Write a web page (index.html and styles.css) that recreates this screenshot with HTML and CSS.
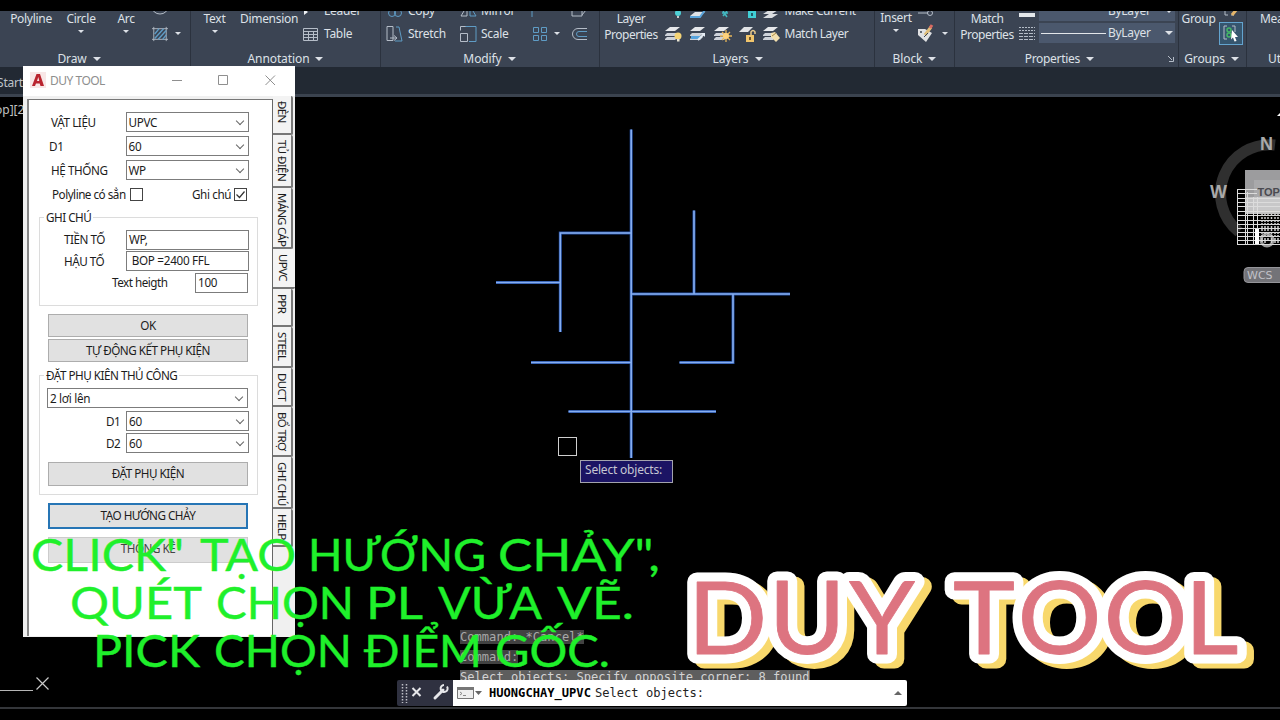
FILE: index.html
```html
<!DOCTYPE html>
<html lang="vi">
<head>
    <meta charset="UTF-8">
    <meta name="viewport" content="width=device-width, initial-scale=1.0">
    <title>DUY TOOL</title>
    <link rel="stylesheet" href="styles.css">
</head>
<body>
<div class="screen">
    <!-- Ribbon -->
    <div class="ribbon">
        <div class="panel draw">
            <div class="tools">
                <div class="big w-polyline">Polyline</div>
                <div class="big w-circle">Circle<i class="caret small"></i></div>
                <div class="big w-arc">Arc<i class="caret small"></i></div>
                <div class="col">
                    <div class="row"><svg width="18" height="18"><ellipse cx="8" cy="5" rx="8" ry="7" class="ln-w"/></svg></div>
                    <div class="row"><svg width="16" height="16" viewBox="0 0 18 18"><path d="M2 1v16M16 1v16M0 3h18M0 15h18" class="ln-w"/><path d="M3 9l5-6M3 14L13 3M7 15l9-10M12 15l4-5" class="ln-b thick"/></svg><i class="caret small gap"></i></div>
                </div>
            </div>
            <div class="panel-title">Draw<i class="caret"></i></div>
        </div>
        <div class="panel annotation">
            <div class="tools">
                <div class="big w-text">Text<i class="caret small"></i></div>
                <div class="big w-dim">Dimension</div>
                <div class="col">
                    <div class="row"><svg width="16" height="16"><path d="M1 6l4 3-4 3z" fill="#eef1f5"/></svg><span>Leader</span></div>
                    <div class="row"><svg width="16" height="16"><path d="M.5 2.5h14v12H.5zM.5 5.5h14M.5 8.5h14M.5 11.500h14M5.500 5v9M10.500 5v9" class="ln-w"/></svg><span>Table</span></div>
                </div>
            </div>
            <div class="panel-title">Annotation<i class="caret"></i></div>
        </div>
        <div class="panel modify">
            <div class="tools">
                <div class="col w-stretch">
                    <div class="row"><svg width="17" height="18"><circle cx="6" cy="11" r="3.500" class="ln-b"/><circle cx="12" cy="11" r="3.500" class="ln-b"/></svg><span>Copy</span></div>
                    <div class="row"><svg width="17" height="18"><path d="M1 1.500h6v14H1z" class="ln-w"/><path d="M10 2h3l3 14H9" class="ln-b"/><path d="M4 13h6M8 10.500l3 2.500-3 2.500" class="ln-w"/></svg><span>Stretch</span></div>
                </div>
                <div class="col w-scale">
                    <div class="row"><svg width="17" height="18"><path d="M7 4v10H1z" class="ln-w"/><path d="M10 4v10h6z" class="ln-b"/></svg><span>Mirror</span></div>
                    <div class="row"><svg width="17" height="18"><path d="M5 1.500h11v15H9" class="ln-b"/><path d="M.5 1.500h5M.5 1.500v4M.5 8.500h7v8h-7z" class="ln-w"/></svg><span>Scale</span></div>
                </div>
                <div class="col w-array">
                    <div class="row"><svg width="16" height="18"><path d="M1 0v15" class="ln-b"/></svg></div>
                    <div class="row"><svg width="16" height="16"><path d="M2.500 1.500h5v5h-5zM2.500 9.500h5v5h-5z" class="ln-b"/><path d="M10.500 1.500h5v5h-5zM10.500 9.500h5v5h-5z" class="ln-b"/></svg><i class="caret small gap"></i></div>
                </div>
                <div class="col">
                    <div class="row"><svg width="17" height="18"><path d="M1 5v9h10V5M11 13l4-5V3" class="ln-w"/></svg></div>
                    <div class="row"><svg width="17" height="16"><path d="M16 2.500H7a5.500 5.500 0 0 0 0 11h9" class="ln-w"/><path d="M16 5.500H8a2.500 2.500 0 0 0 0 5h8" class="ln-b"/></svg></div>
                </div>
            </div>
            <div class="panel-title">Modify<i class="caret"></i></div>
        </div>
        <div class="panel layers">
            <div class="tools">
                <div class="big w-layer">Layer<br>Properties</div>
                <div class="col">
                    <div class="row icons">
                        <svg width="18" height="18"><circle cx="13" cy="11" r="3" fill="#4fd0d6"/><path d="M12 14h2v2h-2z" fill="#ccc"/></svg>
                        <svg width="18" height="18"><path d="M0 14l5-4h10l-5 4z" fill="#dfe2e6"/><path d="M0 15h10l5-7" stroke="#5ba5dc" stroke-width="2" fill="none"/></svg>
                        <svg width="18" height="18"><path d="M8 11h6M9 14l4-5M9 9l4 6" stroke="#42b9c2" stroke-width="1.500"/></svg>
                        <svg width="18" height="18"><path d="M9 9h8v7H9z" fill="#40cfd6"/><path d="M12 11h2v3h-2z" fill="#235d69"/></svg>
                        <svg width="18" height="18"><path d="M0 12l6-4h9l-6 4zM0 16l6-4h9l-6 4z" fill="#d9dce0"/></svg>
                        <span>Make Current</span>
                    </div>
                    <div class="row icons">
                        <svg width="18" height="18"><use href="#sheets"/><circle cx="13" cy="11" r="3.500" fill="#f4d477"/><path d="M12 14h2.500v2.500H12z" fill="#e9e4d3"/></svg>
                        <svg width="18" height="18"><use href="#sheets"/><path d="M1 12.500h10" stroke="#58a5df" stroke-width="3"/><path d="M8 15l6-6" stroke="#e6edf5" stroke-width="2"/><path d="M11 8h4v4z" fill="#e6edf5"/></svg>
                        <svg width="18" height="18"><use href="#sheets"/><path d="M12 5v12M6 11h12M8 7l8 8M16 7l-8 8" stroke="#e8b659" stroke-width="1.300"/><circle cx="12" cy="11" r="3" fill="#ffd27a"/></svg>
                        <svg width="18" height="18"><path d="M0 7l5-5h9L9 7z" fill="#e1e3e6"/><path d="M7 10h8v7H7z" fill="#f1c56c"/><path d="M12 10V7q2-3 4 0v2" stroke="#e9c98c" stroke-width="1.500" fill="none"/><path d="M10 12h2v3h-2z" fill="#70562a"/></svg>
                        <svg width="18" height="18"><use href="#sheets"/><path d="M8 8l4-1 5 6-4 4-5-5z" fill="#f3dfae"/><path d="M9 11l4-3" stroke="#a98945"/></svg>
                        <span>Match Layer</span>
                    </div>
                </div>
            </div>
            <div class="panel-title">Layers<i class="caret"></i></div>
        </div>
        <div class="panel block">
            <div class="tools">
                <div class="big w-insert">Insert<i class="caret small"></i></div>
                <div class="col">
                    <div class="row"><svg width="18" height="18"><path d="M1 11h10" class="ln-w"/><circle cx="13" cy="11" r="2.500" class="ln-w"/></svg></div>
                    <div class="row"><svg width="18" height="19"><path d="M1 5h7l7 4-6 9-8-7z" fill="#e0e1e3"/><path d="M8 11l6-8" stroke="#dfbd79" stroke-width="3"/><path d="M13 4l2-3" stroke="#da6b62" stroke-width="3"/><circle cx="4" cy="8" r="1" fill="#3b4453"/><path d="M7 13l4-4" stroke="#3b4453"/></svg><i class="caret small gap"></i></div>
                </div>
            </div>
            <div class="panel-title">Block<i class="caret"></i></div>
        </div>
        <div class="panel properties">
            <div class="tools">
                <div class="big w-match">Match<br>Properties</div>
                <div class="col w-lines">
                    <div class="row"><svg width="16" height="18"><path d="M0 11h16v4H0z" fill="#e4e7ea"/></svg></div>
                    <div class="row"><svg width="16" height="16"><path d="M0 1.500h16M0 4.500h16" class="ln-w" stroke-dasharray="2 1"/><path d="M0 7.500h16M0 10.500h16M0 13.500h16" class="ln-w" stroke-dasharray="4 1"/></svg></div>
                </div>
                <div class="lists">
                    <div class="list"><span class="rule"></span>ByLayer<i class="caret"></i></div>
                    <div class="list"><span class="rule shown"></span>ByLayer<i class="caret"></i></div>
                </div>
            </div>
            <div class="panel-title">Properties<i class="caret"></i><svg class="launcher" width="6" height="6"><path d="M0 0l4 4M5.500 1v4.500H1" class="ln-w"/></svg></div>
        </div>
        <div class="panel groups">
            <div class="tools">
                <div class="big w-group">Group</div>
                <div class="col">
                    <div class="row"><svg width="20" height="18"><path d="M5 7v6h3M11 13h3" class="ln-w"/><path d="M12 13l5-6" stroke="#e5b66b" stroke-width="3"/></svg></div>
                    <div class="pick"><svg width="22" height="20"><path d="M7 3H4v13h3M12 3h3v6" class="ln-w"/><circle cx="9" cy="7" r="2" class="ln-g"/><circle cx="9" cy="12" r="2" class="ln-g"/><path d="M12 7l6 7h-3l1.500 4-2 .5-1.500-4-2 2z" fill="#fff"/></svg></div>
                </div>
            </div>
            <div class="panel-title">Groups<i class="caret"></i></div>
        </div>
        <div class="panel utilities">
            <div class="tools"><div class="big">Measure</div></div>
            <div class="panel-title">Utilities</div>
        </div>
    </div>
    <div class="file-tabs">Start</div>

    <!-- Drawing area -->
    <div class="model-space">
        <svg class="drawing" viewBox="0 97 1280 623" width="1280" height="623">
            <defs>
                <g id="sheets">
                    <path d="M0 6l5-4h10l-5 4z" fill="#e6e8eb"/>
                    <path d="M0 10l2-2h12l-4 3H0zM0 14l2-2h11l-3 3H0z" fill="#cdd2d9"/>
                </g>
                <path id="pipes" d="M631.200 129.500V458M631 233H560.300V332M496 282.500h64M631 294h159M694 210.500v83M733 294v68.500H679.500M531 362.500h100M568.500 411.500H716"/>
            </defs>
            <text x="-5" y="114" class="view-label">op][2</text>

            <!-- pipes -->
            <use href="#pipes" class="pipe-glow"/>
            <use href="#pipes" class="pipe-core"/>
            <rect x="558.500" y="437.500" width="18" height="18" class="pickbox"/>

            <!-- view cube -->
            <path d="M1275 145a49 49 0 0 0-36 87" class="compass"/>
            <rect x="1245" y="170" width="35" height="44" fill="#9c9c9e"/>
            <rect x="1254" y="180" width="26" height="30" fill="#a9a9ab"/>
            <text x="1266.500" y="150" class="compass-letter">N</text>
            <text x="1218.500" y="198" class="compass-letter">W</text>
            <circle cx="1267" cy="240" r="6" class="south"/>
            <rect x="1246" y="197" width="34" height="17" fill="#d8d8d8" opacity=".65"/>
            <path class="sheet-lines" d="M1237 189.500h20M1237 193.500h20M1237 198.500h43M1237 202.500h43M1237 206.500h43M1237 211.500h43M1237 215.500h43M1237 220.500h43M1237 224.500h43M1237 228.500h43M1237 232.500h43M1237 236.500h43M1237 240.500h43M1237 244.500h43M1237.500 189v56M1245.500 189v56M1247.500 192v52M1253.500 197v48M1257.500 197v48"/>
            <path d="M1262 214v28M1265 214v30M1268 214v26M1271.500 214v31M1275 214v30M1278 214v31" class="sheet-dots"/>
            <text x="1257.500" y="196" class="cube-face">TOP</text>
            <rect x="1255" y="229" width="4" height="15" fill="#fff"/>
            <path d="M1277 116l3-3v3z" fill="#fff"/>
            <rect x="1244" y="267.500" width="50" height="15" rx="4" fill="#737378" stroke="#95959a"/>
            <text x="1247" y="279" class="wcs">WCS</text>

            <path d="M0 690.500h33" stroke="#b5b5b5"/>
            <path d="M36.500 677.500l12 12M48.500 677.500l-12 12" stroke="#c9c9c9" stroke-width="1.200"/>
            <path d="M0 708h1280" stroke="#34363a" stroke-width="2"/>
        </svg>

        <div class="prompt">Select objects:</div>

        <div class="command">
            <div class="history">
                <span>Command: *Cancel*</span>
                <span>Command:</span>
                <span>Select objects: Specify opposite corner: 8 found</span>
            </div>
            <div class="command-line">
                <div class="handle">
                    <svg width="56" height="26"><path d="M5.500 4v19M9.500 4v19" stroke="#bdbfc6" stroke-width="1.500" stroke-dasharray="1.500 1.500"/><path d="M15.500 8l8 8M23.500 8l-8 8" stroke="#e6e7ea" stroke-width="2"/><path d="M38 18l8-8" stroke="#e6e7ea" stroke-width="3" stroke-linecap="round"/><path d="M50 6.500a3.500 3.500 0 1 1-3-1.500" fill="none" stroke="#e6e7ea" stroke-width="2"/></svg>
                </div>
                <div class="entry">
                    <svg width="28" height="16"><path d="M.5 2.500h16v11H.5z" fill="#eee" stroke="#777"/><path d="M0 2h17v3H0z" fill="#777"/><path d="M3 7l2 1.500L3 10M6 10.500h3" stroke="#888" fill="none"/><path d="M18 6h7l-3.500 4z" fill="#666"/></svg>
                    <b>HUONGCHAY_UPVC</b><span>Select objects:</span>
                    <i class="caret up"></i>
                </div>
            </div>
        </div>
    </div>

    <!-- Tool window -->
    <div class="window">
        <div class="title-bar">
            <svg width="16" height="16"><path d="M0 0h16v16H0z" fill="#f8e7e7"/><path d="M2 14L6.500 2h3.500l4 12h-3.500l-.8-2.500H6L5 14zM7 9h2.300L8.300 5z" fill="#b9242f" fill-rule="evenodd"/></svg>
            <span class="title">DUY TOOL</span>
            <svg class="controls" width="110" height="14"><path d="M4 7.500h10M50.500 2.500h9v9h-9zM97.500 2.500l9.500 9.500M107 2.500l-9.500 9.500" fill="none" stroke="#8f8f8f"/></svg>
        </div>
        <div class="window-body">
            <div class="form">
                <div class="field top"><label>VẬT LIỆU</label><div class="combo">UPVC</div></div>
                <div class="field top"><label class="shift-l">D1</label><div class="combo">60</div></div>
                <div class="field top"><label>HỆ THỐNG</label><div class="combo">WP</div></div>
                <div class="checks">
                    <span class="check-label">Polyline có sẳn</span><span class="check"></span>
                    <span class="check-label right">Ghi chú</span><span class="check"><svg width="11" height="11"><path d="M1.500 5.500L4.500 8.500L9.500 2.500" fill="none" stroke="#333" stroke-width="1.200"/></svg></span>
                </div>
                <fieldset class="note">
                    <legend>GHI CHÚ</legend>
                    <div class="field"><label class="l-tien">TIỀN TỐ</label><div class="input">WP,</div></div>
                    <div class="field"><label class="l-tien">HẬU TỐ</label><div class="input">&nbsp;BOP =2400 FFL</div></div>
                    <div class="field"><label class="l-height">Text heigth</label><div class="input short">100</div></div>
                </fieldset>
                <div class="button">OK</div>
                <div class="button">TỰ ĐỘNG KẾT PHỤ KIỆN</div>
                <fieldset class="fitting">
                    <legend>ĐẶT PHỤ KIÊN THỦ CÔNG</legend>
                    <div class="combo wide">2 lơi lên</div>
                    <div class="field"><label class="l-size">D1</label><div class="combo">60</div></div>
                    <div class="field"><label class="l-size">D2</label><div class="combo">60</div></div>
                    <div class="button place">ĐẶT PHỤ KIỆN</div>
                </fieldset>
                <div class="button focus">TẠO HƯỚNG CHẢY</div>
                <div class="button stats">THỐNG KÊ</div>
            </div>
            <div class="tabs">
                <div class="tab t1">ĐÈN</div>
                <div class="tab t2">TỦ ĐIỆN</div>
                <div class="tab t3">MÁNG CÁP</div>
                <div class="tab t4 active">UPVC</div>
                <div class="tab t5">PPR</div>
                <div class="tab t6">STEEL</div>
                <div class="tab t7">DUCT</div>
                <div class="tab t8">BỔ TRỢ</div>
                <div class="tab t9">GHI CHÚ</div>
                <div class="tab t10">HELP</div>
            </div>
        </div>
    </div>

    <!-- Video captions -->
    <svg class="captions" width="1280" height="720">
        <defs>
            <text id="brand" y="654.500"><tspan x="661 739 816.500 916.300 978.400 1061 1139">DUYTOOL</tspan></text>
        </defs>
        <g class="steps">
            <text x="31" y="571" textLength="153" lengthAdjust="spacingAndGlyphs">CLICK"</text>
            <text x="200" y="571" textLength="96" lengthAdjust="spacingAndGlyphs">TẠO</text>
            <text x="308" y="571" textLength="178" lengthAdjust="spacingAndGlyphs">HƯỚNG</text>
            <text x="498" y="571" textLength="162" lengthAdjust="spacingAndGlyphs">CHẢY",</text>
            <text x="70" y="619" textLength="132" lengthAdjust="spacingAndGlyphs">QUÉT</text>
            <text x="216" y="619" textLength="138" lengthAdjust="spacingAndGlyphs">CHỌN</text>
            <text x="366" y="619" textLength="57" lengthAdjust="spacingAndGlyphs">PL</text>
            <text x="438" y="619" textLength="104" lengthAdjust="spacingAndGlyphs">VỪA</text>
            <text x="557" y="619" textLength="77" lengthAdjust="spacingAndGlyphs">VẼ.</text>
            <text x="93" y="666.500" textLength="107" lengthAdjust="spacingAndGlyphs">PICK</text>
            <text x="214" y="666.500" textLength="138" lengthAdjust="spacingAndGlyphs">CHỌN</text>
            <text x="364" y="666.500" textLength="118" lengthAdjust="spacingAndGlyphs">ĐIỂM</text>
            <text x="495" y="666.500" textLength="115" lengthAdjust="spacingAndGlyphs">GỐC.</text>
        </g>
        <g class="brand" transform="scale(1.04 1)">
            <use href="#brand" class="brand-shadow"/>
            <use href="#brand" class="brand-outline"/>
            <use href="#brand" class="brand-fill"/>
        </g>
    </svg>
</div>
</body>
</html>
```
FILE: styles.css
```css
/* Global styles */
* {
    box-sizing: border-box;
}

body {
    margin: 0;
    background: #000;
    font-family: "Noto Sans", "Open Sans", sans-serif;
    font-size: 12px;
}

.screen {
    position: relative;
    width: 1280px;
    height: 720px;
    padding-top: 11px;
    overflow: hidden;
    background: #000;
}

svg {
    flex: none;
    display: block;
}

.ln-w, .ln-b, .ln-g {
    fill: none;
    stroke: #b5bdc8;
    stroke-width: 1;
}

.ln-b { stroke: #5f9cc5; }
.ln-b.thick { stroke-width: 1.6; }
.ln-g { stroke: #45b766; stroke-width: 1.5; }

/* Ribbon */
.ribbon {
    display: flex;
    height: 56px;
    background: #3b4453;
    color: #dde1e7;
    line-height: 16px;
    letter-spacing: -0.3px;
    overflow: hidden;
}

.panel {
    flex: none;
    display: flex;
    flex-direction: column;
    border-right: 1px solid #2b323e;
    overflow: hidden;
    white-space: nowrap;
}

.draw { width: 191px; }
.annotation { width: 190px; }
.modify { width: 219px; }
.layers { width: 275px; }
.block { width: 80px; }
.properties { width: 224px; }
.groups { width: 68px; }
.utilities { width: 33px; border: 0; }

.tools {
    display: flex;
    height: 39px;
    overflow: hidden;
    align-items: flex-start;
}

.panel-title {
    display: flex;
    align-items: center;
    justify-content: center;
    gap: 6px;
    height: 17px;
    letter-spacing: -0.1px;
}

.draw .panel-title { padding-right: 32px; }
.modify .panel-title { padding-right: 1px; }
.layers .panel-title { padding-left: 1px; }
.utilities .panel-title { justify-content: flex-start; padding-left: 21px; }
.groups .panel-title { padding-right: 2px; }

.launcher { margin: 0 0 0 68px; }
.properties .panel-title { justify-content: flex-end; padding-right: 4px; letter-spacing: -0.3px; }

.caret {
    border: 4px solid transparent;
    border-top: 4px solid #dde1e7;
    border-bottom: 0;
}

.caret.small {
    border-width: 3px 3px 0;
}

.caret.up {
    border-top: 0;
    border-bottom: 4px solid #666;
    margin-left: auto;
}

.gap { margin-left: 7px; }

.big {
    flex: none;
    display: flex;
    flex-direction: column;
    align-items: center;
    text-align: center;
}

.big .caret { margin-top: 3px; }
.w-polyline { width: 62px; }
.w-circle { width: 38px; }
.w-arc { width: 52px; }
.w-text { width: 47px; }
.w-dim { width: 65px; letter-spacing: -0.3px; margin-right: 0; padding-right: 3px; }
.w-layer { width: 62px; display: block; letter-spacing: -0.5px; }
.w-insert { width: 42px; margin-top: -1px; }
.w-match { width: 64px; display: block; letter-spacing: -0.5px; }
.w-group { width: 41px; padding-right: 2px; }
.utilities .big { margin-left: 13px; }

.col {
    flex: none;
    margin-top: -12px;
}

.w-stretch { width: 74px; margin-left: 5px; }
.w-scale { width: 71px; margin-left: 0; }
.w-array { width: 40px; }
.w-lines { width: 20px; }

.row {
    display: flex;
    align-items: center;
    height: 23px;
}

.row span { margin-left: 5px; }
.w-scale .row span { margin-left: 4px; }
.icons svg { margin-right: 6.5px; }
.icons span { margin-left: -3px; letter-spacing: -0.5px; }
.layers .col { padding-left: 3px; }

.lists { margin-top: -10px; }

.list {
    display: flex;
    align-items: center;
    width: 136px;
    height: 20px;
    margin-bottom: 2px;
    padding-left: 2px;
    background: #4b586d;
}

.rule {
    width: 65px;
    height: 1px;
    margin-right: 2px;
}

.rule.shown { background: #e3e6ea; }
.list .caret { margin: 0 2px 0 auto; }

.pick {
    width: 24px;
    height: 23px;
    margin-left: -1px;
    border: 1px solid #63a4cf;
    background: #36566f;
}

.file-tabs {
    height: 30px;
    padding-top: 6px;
    background: #222933;
    border-bottom: 3px solid #3b434f;
    color: #bfc3c9;
    line-height: 20px;
    text-indent: -3px;
    letter-spacing: -0.2px;
}

/* Drawing area */
.model-space {
    position: relative;
    height: 623px;
}

.view-label { font-size: 12px; fill: #c0c0c0; }
.pipe-glow { fill: none; stroke: #2450a6; stroke-width: 3; }
.pipe-core { fill: none; stroke: #86aef0; stroke-width: 1.6; }
.pickbox { fill: none; stroke: #cfcfcf; }
.compass { fill: none; stroke: #2f2f2f; stroke-width: 11; }

.compass-letter {
    font: bold 18px "Liberation Sans", sans-serif;
    fill: #a9a9a9;
    text-anchor: middle;
}

.cube-face {
    font: bold 11px "Liberation Sans", sans-serif;
    fill: #4a4a50;
}

.south { fill: none; stroke: #999; stroke-width: 3; }
.sheet-lines { stroke: #dcdcdc; stroke-width: 1; fill: none; }
.sheet-dots { stroke: #d0d0d0; stroke-width: 1.5; stroke-dasharray: 2 1; }
.wcs { font: 11px "DejaVu Sans", sans-serif; fill: #c2c2c8; }

.prompt {
    position: absolute;
    left: 580px;
    top: 363px;
    width: 93px;
    height: 23px;
    padding-left: 4px;
    border: 1px solid #a3a3ad;
    background: #1b1464;
    color: #c6c6d2;
    line-height: 18px;
    letter-spacing: -0.2px;
}

.command {
    position: absolute;
    left: 397px;
    top: 533px;
    width: 510px;
    font: 12.1px "DejaVu Sans Mono", monospace;
}

.history {
    display: flex;
    flex-direction: column;
    align-items: flex-start;
    gap: 6px;
    height: 50px;
    padding-left: 63px;
    overflow: hidden;
    color: #a9a9a9;
}

.history span {
    flex: none;
    height: 14px;
    line-height: 14px;
    background: #424242;
}

.history span:last-child { background: #5e5e5e; color: #d3d3d3; }

.command-line {
    display: flex;
    height: 26px;
}

.handle {
    width: 56px;
    background: #2f3140;
    border-radius: 2px 0 0 2px;
}

.entry {
    flex: 1;
    display: flex;
    align-items: center;
    padding: 0 5px 0 4px;
    background: #fff;
    color: #222;
    border-radius: 0 2px 2px 0;
}

.entry b { margin: 0 4px 0 4px; color: #000; }

/* Tool window */
.window {
    position: absolute;
    left: 23px;
    top: 66px;
    width: 272px;
    height: 571px;
    background: #f0f0f0;
    color: #1c1c1c;
}

.title-bar {
    display: flex;
    align-items: center;
    height: 30px;
    padding: 0 17px 2px 7px;
    background: #fff;
}

.title {
    margin-left: 4px;
    color: #8e8e8e;
    letter-spacing: -0.5px;
}

.controls { margin-left: auto; }

.window-body {
    display: flex;
    height: 541px;
    padding-left: 4px;
}

.form {
    width: 246px;
    height: 537px;
    margin-top: 3px;
    padding: 12px 0 0 11px;
    background: #fff;
    border-top: 1px solid #777;
    border-left: 2px solid #888;
    border-right: 1px solid #666;
    font-size: 11.7px;
    line-height: 17px;
    letter-spacing: -0.5px;
    white-space: nowrap;
}

.field {
    display: flex;
    align-items: center;
}

.field label { flex: none; }

.field.top {
    height: 20px;
    margin-bottom: 4px;
}

.field.top label {
    width: 85.5px;
    padding-left: 11px;
    letter-spacing: -0.4px;
}

.field.top label.shift-l { padding-left: 9px; }

.combo, .input {
    width: 123px;
    height: 20px;
    padding-left: 2px;
    border: 1px solid #7c7c7c;
    background: #fff;
    letter-spacing: -0.3px;
}

.combo {
    display: flex;
    justify-content: space-between;
    line-height: 18px;
}

.combo::after {
    content: "";
    width: 5px;
    height: 5px;
    margin: 5px 5px 0 0;
    border: solid #666;
    border-width: 0 1px 1px 0;
    transform: rotate(45deg);
}

.checks {
    display: flex;
    align-items: center;
    height: 20px;
    margin-top: 4px;
    padding-left: 12px;
    letter-spacing: -0.5px;
}

.check-label { width: 78px; }
.check-label.right { width: 42px; margin-left: 49px; letter-spacing: -0.4px; }

.check {
    width: 13px;
    height: 13px;
    border: 1px solid #444;
}

fieldset {
    width: 219px;
    margin: 0 0 0 -1px;
    padding: 0;
    border: 1px solid #dcdcdc;
    min-inline-size: 0;
}

legend {
    height: 17px;
    margin-left: 4px;
    padding: 0 2px;
}

.note {
    height: 97px;
    margin-top: 5px;
}

.note .field { height: 21px; margin-bottom: 0.5px; }
.note .field:first-of-type { margin-top: 3px; }
.l-tien { width: 86px; padding-left: 24px; }
.l-height { width: 155px; padding-left: 72px; }
.input.short { width: 53px; }

.button {
    width: 200px;
    height: 23px;
    margin: 8px 0 0 8px;
    border: 1px solid #adadad;
    background: #e1e1e1;
    line-height: 21px;
    text-align: center;
}

.button + .button { margin-top: 2px; }

.fitting {
    height: 128px;
    margin-top: 5px;
}

.combo.wide {
    width: 201px;
    margin: 4px 0 3px 7px;
}

.fitting .field { height: 20px; margin-bottom: 2px; }
.l-size { width: 86px; padding-left: 66px; }
.button.place { margin: 9px 0 0 8px; height: 24px; }

.button.focus {
    height: 26px;
    margin-top: 8px;
    border: 2px solid #2675b5;
}

.button.stats {
    height: 26px;
    margin-top: 8px;
    border-color: #ccc;
    color: #444;
}

.tabs {
    width: 19px;
    background: #f0f0f0;
}

.tab {
    width: 20px;
    padding-top: 5px;
    border-right: 2px solid #777;
    border-bottom: 2px solid #777;
    border-radius: 0 2px 2px 0;
    background: #f3f3f3;
    writing-mode: vertical-rl;
    line-height: 17px;
    white-space: nowrap;
    font-size: 11.5px;
    letter-spacing: -0.6px;
}

.tab.active {
    width: 22px;
    padding-right: 3px;
    border-right: 0;
    background: #f4f4f4;
}

.t1 { height: 39px; }
.t2 { height: 53px; }
.t3 { height: 61px; letter-spacing: -0.8px; }
.t4 { height: 40px; }
.t5 { height: 38px; }
.t6 { height: 41px; }
.t7 { height: 39px; }
.t8 { height: 50px; }
.t9 { height: 52px; }
.t10 { height: 38px; }

/* Video captions */
.captions {
    position: absolute;
    left: 0;
    top: 0;
}

.steps {
    font: 400 44px Lato, "Noto Sans", sans-serif;
    fill: #1ff02b;
    stroke: #1ff02b;
    stroke-width: 0.4;
}

.brand {
    font: 400 101px Lato, sans-serif;
    stroke-linejoin: round;
}

.brand-shadow {
    fill: #f8d86c;
    stroke: #f8d86c;
    stroke-width: 19px;
    transform: translate(7px, 5px);
}

.brand-outline { fill: #fff; stroke: #fff; stroke-width: 19px; }
.brand-fill { fill: #dd7480; stroke: #dd7480; stroke-width: 0.8px; }
```
